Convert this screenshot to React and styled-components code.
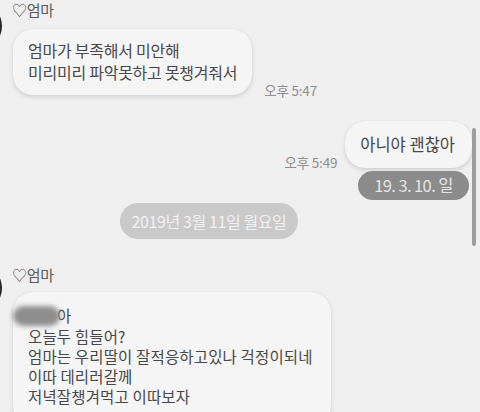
import React from "react";
import styled, { createGlobalStyle } from "styled-components";

const Global = createGlobalStyle`
  html, body { margin: 0; padding: 0; background: #efefef; }
  body { width: 480px; height: 412px; overflow: hidden; }
  * { box-sizing: border-box; }
`;

const Screen = styled.div`
  position: relative;
  width: 480px;
  height: 412px;
  overflow: hidden;
  background: #efefef;
  font-family: "Noto Sans CJK KR", "Noto Sans", sans-serif;
  color: #454545;
  display: flex;
  flex-direction: column;
`;

const Group = styled.div`
  display: flex;
  align-items: flex-start;
  margin-top: ${(p) => p.$top || 0}px;
`;

const Avatar = styled.div`
  width: 48px;
  height: 48px;
  border-radius: 50%;
  background: #262626;
  margin-left: -46px;
  margin-top: ${(p) => p.$top || 0}px;
  flex-shrink: 0;
`;

const Column = styled.div`
  display: flex;
  flex-direction: column;
  margin-left: 10px;
`;

const Name = styled.div`
  font-size: 15px;
  line-height: 20px;
  height: 20px;
  color: #5a5a5a;
  letter-spacing: -0.3px;
`;

const Row = styled.div`
  display: flex;
  align-items: flex-end;
  gap: ${(p) => p.$gap || 12}px;
  margin-top: ${(p) => p.$top || 0}px;
  margin-left: 1px;
`;

const Bubble = styled.div`
  background: #f5f5f5;
  border-radius: 20px;
  padding: ${(p) => p.$pad || "10px 15px 12px 15px"};
  font-size: ${(p) => p.$size || 16}px;
  line-height: ${(p) => p.$lh || 22}px;
  letter-spacing: ${(p) => p.$ls || 0}px;
  color: #484848;
  box-shadow: 0 2px 4px rgba(0, 0, 0, 0.13), 0 0 1px rgba(0, 0, 0, 0.1);
  white-space: pre;
`;

const Time = styled.div`
  font-size: 13.5px;
  color: #8e8e8e;
  letter-spacing: -0.2px;
  line-height: 16px;
  margin-bottom: ${(p) => p.$mb || 0}px;
`;

const RightBlock = styled.div`
  display: flex;
  flex-direction: column;
  align-items: flex-end;
  margin-top: 26px;
  padding-right: 11px;
`;

const RightRow = styled.div`
  display: flex;
  align-items: flex-end;
  gap: 8px;
  margin-right: -3px;
`;

const DarkPill = styled.div`
  margin-top: 3px;
  height: 29px;
  width: 111px;
  border-radius: 15px;
  background: #8b8b8b;
  color: #e4e4e4;
  font-size: 16.5px;
  line-height: 29px;
  text-align: center;
  letter-spacing: -0.6px;
`;

const ScrollBar = styled.div`
  position: absolute;
  right: 4px;
  top: 128px;
  width: 4px;
  height: 118px;
  border-radius: 2px;
  background: #9d9d9d;
`;

const DateRow = styled.div`
  display: flex;
  padding-left: 120px;
  margin-top: 3px;
`;

const DatePill = styled.div`
  height: 36px;
  width: 178px;
  border-radius: 18px;
  background: #c9c9c9;
  color: #f1f1f1;
  font-size: 16px;
  line-height: 36px;
  text-align: center;
  letter-spacing: -0.4px;
`;

const Blur = styled.span`
  display: inline-block;
  width: 47px;
  height: 20px;
  border-radius: 10px;
  background: #8e8e8e;
  filter: blur(2.5px);
  vertical-align: -4px;
  margin-left: -15px;
  margin-right: -3px;
`;

export default function App() {
  return (
    <Screen>
      <Global />
      <Group>
        <Avatar $top={2} />
        <Column>
          <Name>♡엄마</Name>
          <Row $top={9} $gap={12}>
            <Bubble $ls={-0.25}>{"엄마가 부족해서 미안해\n미리미리 파악못하고 못챙겨줘서"}</Bubble>
            <Time $mb={-3}>오후 5:47</Time>
          </Row>
        </Column>
      </Group>
      <RightBlock>
        <RightRow>
          <Time $mb={-2}>오후 5:49</Time>
          <Bubble $pad="12px 17px 13px 15px" $size={16.5}>아니야 괜찮아</Bubble>
        </RightRow>
        <DarkPill>19. 3. 10. 일</DarkPill>
      </RightBlock>
      <DateRow>
        <DatePill>2019년 3월 11일 월요일</DatePill>
      </DateRow>
      <Group $top={26}>
        <Avatar $top={-1} />
        <Column>
          <Name>♡엄마</Name>
          <Row $top={7}>
            <Bubble $pad="13px 18px 20px 15px" $size={15.5} $lh={20} $ls={0.15}>
              <Blur />
              {"아\n오늘두 힘들어?\n엄마는 우리딸이 잘적응하고있나 걱정이되네\n이따 데리러갈께\n저녁잘챙겨먹고 이따보자"}
            </Bubble>
          </Row>
        </Column>
      </Group>
      <ScrollBar />
    </Screen>
  );
}
